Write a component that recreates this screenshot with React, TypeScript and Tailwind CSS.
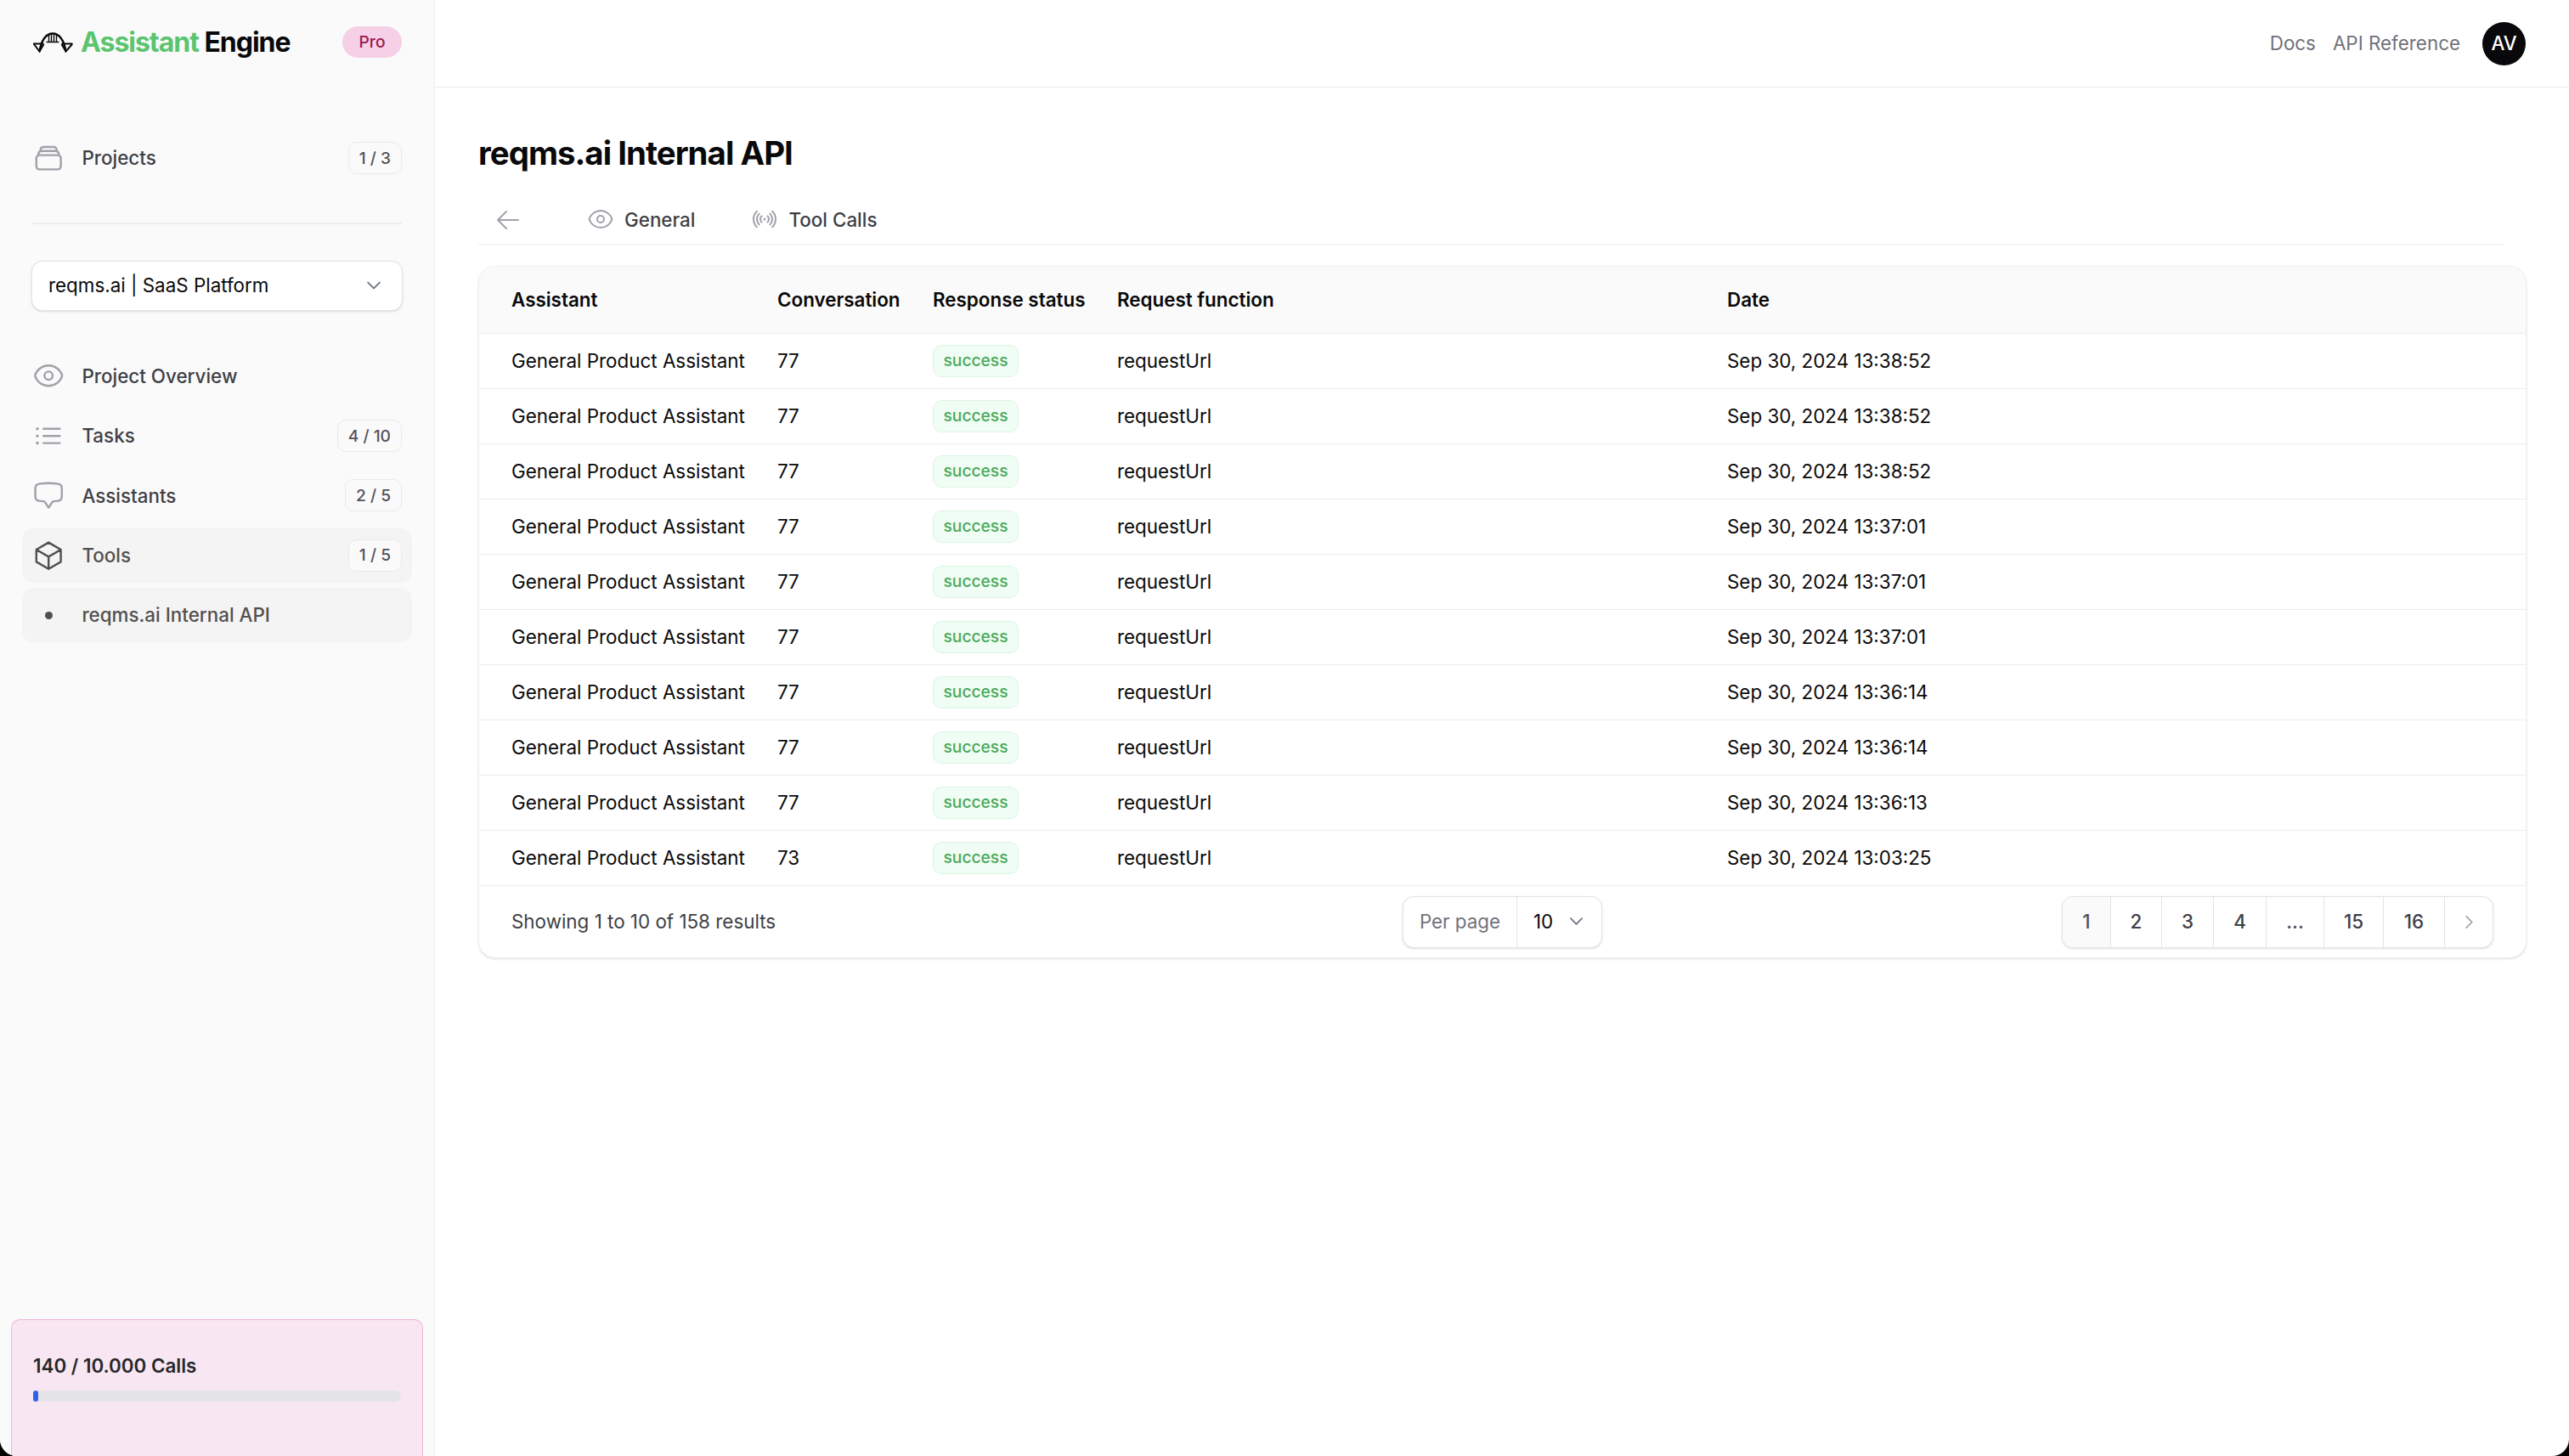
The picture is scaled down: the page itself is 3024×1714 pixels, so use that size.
import {
  HiOutlineArrowLeft,
  HiOutlineChatBubbleBottomCenter,
  HiOutlineChevronDown,
  HiOutlineChevronRight,
  HiOutlineCube,
  HiOutlineEye,
  HiOutlineListBullet,
  HiOutlineRectangleStack,
  HiOutlineSignal,
} from "react-icons/hi2";

const ROWS = [
  { conversation: "77", date: "Sep 30, 2024 13:38:52" },
  { conversation: "77", date: "Sep 30, 2024 13:38:52" },
  { conversation: "77", date: "Sep 30, 2024 13:38:52" },
  { conversation: "77", date: "Sep 30, 2024 13:37:01" },
  { conversation: "77", date: "Sep 30, 2024 13:37:01" },
  { conversation: "77", date: "Sep 30, 2024 13:37:01" },
  { conversation: "77", date: "Sep 30, 2024 13:36:14" },
  { conversation: "77", date: "Sep 30, 2024 13:36:14" },
  { conversation: "77", date: "Sep 30, 2024 13:36:13" },
  { conversation: "73", date: "Sep 30, 2024 13:03:25" },
];

const PAGES = [
  { label: "1", className: "w-[57px] bg-[#fafafa] text-[#52525b]" },
  { label: "2", className: "w-[60px] text-[#3f3f46]" },
  { label: "3", className: "w-[61px] text-[#3f3f46]" },
  { label: "4", className: "w-[62px] text-[#3f3f46]" },
  { label: "...", className: "w-[68px] text-[#52525b]" },
  { label: "15", className: "w-[70px] text-[#3f3f46]" },
  { label: "16", className: "w-[72px] text-[#3f3f46]" },
];

const fontStack = "font-['Inter','Liberation_Sans',sans-serif]";

function Count({ value }: { value: string }) {
  return (
    <span className="ml-auto flex h-[38px] items-center rounded-[10px] border-[1.6px] border-[#eaeaea] bg-[#fafafa] px-[12px] text-[19.2px] font-medium text-[#52525b]">
      {value}
    </span>
  );
}

function Logo() {
  return (
    <svg viewBox="8 12 47 24" className="h-[24px] w-[48px] shrink-0" fill="none" stroke="#09090b" strokeWidth="2">
      <path d="M8.5 25.5H21M42 25.5H55" />
      <path d="M9.5 26l6.5 8.5L21 26M42 26l5 8.5L54.5 26" />
      <path d="M16 35C18 21 24 13.5 31.5 13.5S45 21 47 35" strokeWidth="2.4" />
      <path d="M24 23.5H39M27 15v8.5M30 14v9.5M33 14v9.5M36 15v8.5" strokeWidth="1.4" />
    </svg>
  );
}

function Sidebar() {
  const navRow = "flex h-[64px] items-center gap-[20px] rounded-[13px] px-[12px] text-[22.4px] font-medium";
  return (
    <aside className="flex h-full w-[512px] shrink-0 flex-col border-r-[1.6px] border-[#f0f0f1] bg-[#fafafa]">
      <div className="flex h-[99px] items-center pl-[38px] pr-[38px]">
        <Logo />
        <span className="ml-[9px] text-[32px] font-bold tracking-[-0.032em] text-[#5bc46f]">
          Assistant <span className="text-[#09090b]">Engine</span>
        </span>
        <span className="ml-auto flex h-[37px] w-[70px] items-center justify-center rounded-full bg-[#f5d0e6] text-[19.2px] font-medium text-[#9d174d]">
          Pro
        </span>
      </div>

      <div className="mt-[55px] px-[26px]">
        <div className={`${navRow} text-[#3f3f46]`}>
          <HiOutlineRectangleStack className="size-[38.4px] text-[#a1a1aa]" />
          Projects
          <Count value="1 / 3" />
        </div>
      </div>

      <div className="mx-[38px] mt-[44px] h-[1.6px] bg-[#ececee]" />

      <button className="mx-[37px] mt-[43px] flex h-[59px] items-center justify-between rounded-[13px] border-[1.6px] border-[#e4e4e7] bg-white pl-[19px] pr-[22px] text-[22.4px] text-[#09090b] shadow-sm">
        reqms.ai | SaaS Platform
        <HiOutlineChevronDown className="size-[22px] text-[#6b7280]" strokeWidth={2} />
      </button>

      <nav className="mt-[45px] flex flex-col gap-[6.4px] px-[26px]">
        <div className={`${navRow} text-[#3f3f46]`}>
          <HiOutlineEye className="size-[38.4px] text-[#a1a1aa]" />
          Project Overview
        </div>
        <div className={`${navRow} text-[#3f3f46]`}>
          <HiOutlineListBullet className="size-[38.4px] text-[#a1a1aa]" />
          Tasks
          <Count value="4 / 10" />
        </div>
        <div className={`${navRow} text-[#3f3f46]`}>
          <HiOutlineChatBubbleBottomCenter className="size-[38.4px] text-[#a1a1aa]" />
          Assistants
          <Count value="2 / 5" />
        </div>
        <div className={`${navRow} bg-[#f4f4f5] text-[#52504e]`}>
          <HiOutlineCube className="size-[38.4px] text-[#52504e]" />
          Tools
          <Count value="1 / 5" />
        </div>
        <div className={`${navRow} bg-[#f4f4f5] text-[#52504e]`}>
          <span className="flex size-[38.4px] items-center justify-center">
            <span className="size-[9px] rounded-full bg-[#52504e]" />
          </span>
          reqms.ai Internal API
        </div>
      </nav>

      <div className="mx-[13px] mt-auto h-[161px] rounded-t-[10px] border-[1.6px] border-b-0 border-[#efb3d6] bg-[#f8e7f2] px-[25px] pt-[38px]">
        <p className="text-[22.4px] font-semibold leading-[32px] text-[#27272a]">140 / 10.000 Calls</p>
        <div className="mt-[13px] h-[13px] rounded-full bg-[#e4e4e7]">
          <div className="h-full w-[6px] rounded-full bg-[#2f62ea]" />
        </div>
      </div>
    </aside>
  );
}

function Tabs() {
  return (
    <div className="mt-[15px] mr-[27px] flex h-[64px] items-center border-b-[1.6px] border-[#ececee] pt-[6px] text-[22.4px] font-medium text-[#3f3f46]">
      <HiOutlineArrowLeft className="ml-[19px] size-[32px] text-[#a1a1aa]" />
      <span className="ml-[77px] flex items-center gap-[12px]">
        <HiOutlineEye className="size-[32px] text-[#a1a1aa]" />
        General
      </span>
      <span className="ml-[66px] flex items-center gap-[12px]">
        <HiOutlineSignal className="size-[32px] text-[#a1a1aa]" />
        Tool Calls
      </span>
    </div>
  );
}

function LogTable() {
  const head = "whitespace-nowrap px-[19px] text-left text-[22.4px] font-semibold text-[#09090b]";
  const cell = "px-[19px] text-[22.4px] text-[#09090b]";
  return (
    <table className="w-full table-fixed border-collapse">
      <colgroup>
        <col className="w-[332px]" />
        <col className="w-[183px]" />
        <col className="w-[217px]" />
        <col className="w-[718px]" />
        <col />
      </colgroup>
      <thead>
        <tr className="h-[78px] bg-[#fafafa]">
          <th className={`${head} pl-[38px]`}>Assistant</th>
          <th className={head}>Conversation</th>
          <th className={head}>Response status</th>
          <th className={head}>Request function</th>
          <th className={head}>Date</th>
        </tr>
      </thead>
      <tbody>
        {ROWS.map((row, i) => (
          <tr key={i} className="h-[65px] border-t-[1.6px] border-[#ececee]">
            <td className={`${cell} pl-[38px]`}>General Product Assistant</td>
            <td className={cell}>{row.conversation}</td>
            <td className={cell}>
              <span className="flex h-[38px] w-[101px] items-center justify-center rounded-[10px] border-[1.6px] border-[#dcf5e3] bg-[#f0fdf4] text-[19.2px] font-medium text-[#4aa85a]">
                success
              </span>
            </td>
            <td className={cell}>requestUrl</td>
            <td className={cell}>{row.date}</td>
          </tr>
        ))}
      </tbody>
    </table>
  );
}

function TableFooter() {
  return (
    <div className="grid h-[85px] grid-cols-[1fr_auto_1fr] items-center border-t-[1.6px] border-[#ececee] px-[38px]">
      <span className="text-[22.4px] text-[#3f3f46]">Showing 1 to 10 of 158 results</span>
      <div className="flex h-[61px] w-[235px] items-center rounded-[13px] border-[1.6px] border-[#e4e4e7] bg-white text-[22.4px] shadow-sm">
        <span className="flex h-full w-[134px] items-center justify-center border-r-[1.6px] border-[#e4e4e7] text-[#71717a]">
          Per page
        </span>
        <span className="flex flex-1 items-center gap-[17px] pl-[19px] text-[#09090b]">
          10
          <HiOutlineChevronDown className="size-[21px] text-[#6b7280]" strokeWidth={2} />
        </span>
      </div>
      <div className="flex justify-end">
        <div className="flex h-[61px] overflow-hidden rounded-[13px] border-[1.6px] border-[#e4e4e7] bg-white text-[22.4px] font-medium shadow-sm">
          {PAGES.map((page) => (
            <span
              key={page.label}
              className={`flex items-center justify-center border-r-[1.6px] border-[#e4e4e7] ${page.className}`}
            >
              {page.label}
            </span>
          ))}
          <span className="flex w-[56px] items-center justify-center">
            <HiOutlineChevronRight className="size-[21px] text-[#a1a1aa]" strokeWidth={2} />
          </span>
        </div>
      </div>
    </div>
  );
}

export default function App() {
  return (
    <div className={`h-[1714px] w-[3024px] overflow-hidden bg-black ${fontStack}`}>
      <div className="flex h-full overflow-hidden rounded-b-[20px] bg-white">
        <Sidebar />
        <div className="flex min-w-0 flex-1 flex-col">
          <header className="flex h-[103px] shrink-0 items-center justify-end border-b-[1.6px] border-[#ececee] pr-[51px] text-[22.4px] text-[#71717a]">
            <span>Docs</span>
            <span className="ml-[20px]">API Reference</span>
            <span className="ml-[26px] flex size-[51px] items-center justify-center rounded-full bg-[#09090b] text-[22.4px] font-medium text-white">
              AV
            </span>
          </header>
          <main className="pl-[51px] pr-[50px] pt-[48px]">
            <h1 className="text-[38.4px] font-bold leading-[58px] tracking-[-0.025em] text-[#09090b]">
              reqms.ai Internal API
            </h1>
            <Tabs />
            <section className="mt-[25px] overflow-hidden rounded-[20px] border-[1.6px] border-[#f0f0f1] bg-white shadow-sm">
              <LogTable />
              <TableFooter />
            </section>
          </main>
        </div>
      </div>
    </div>
  );
}
